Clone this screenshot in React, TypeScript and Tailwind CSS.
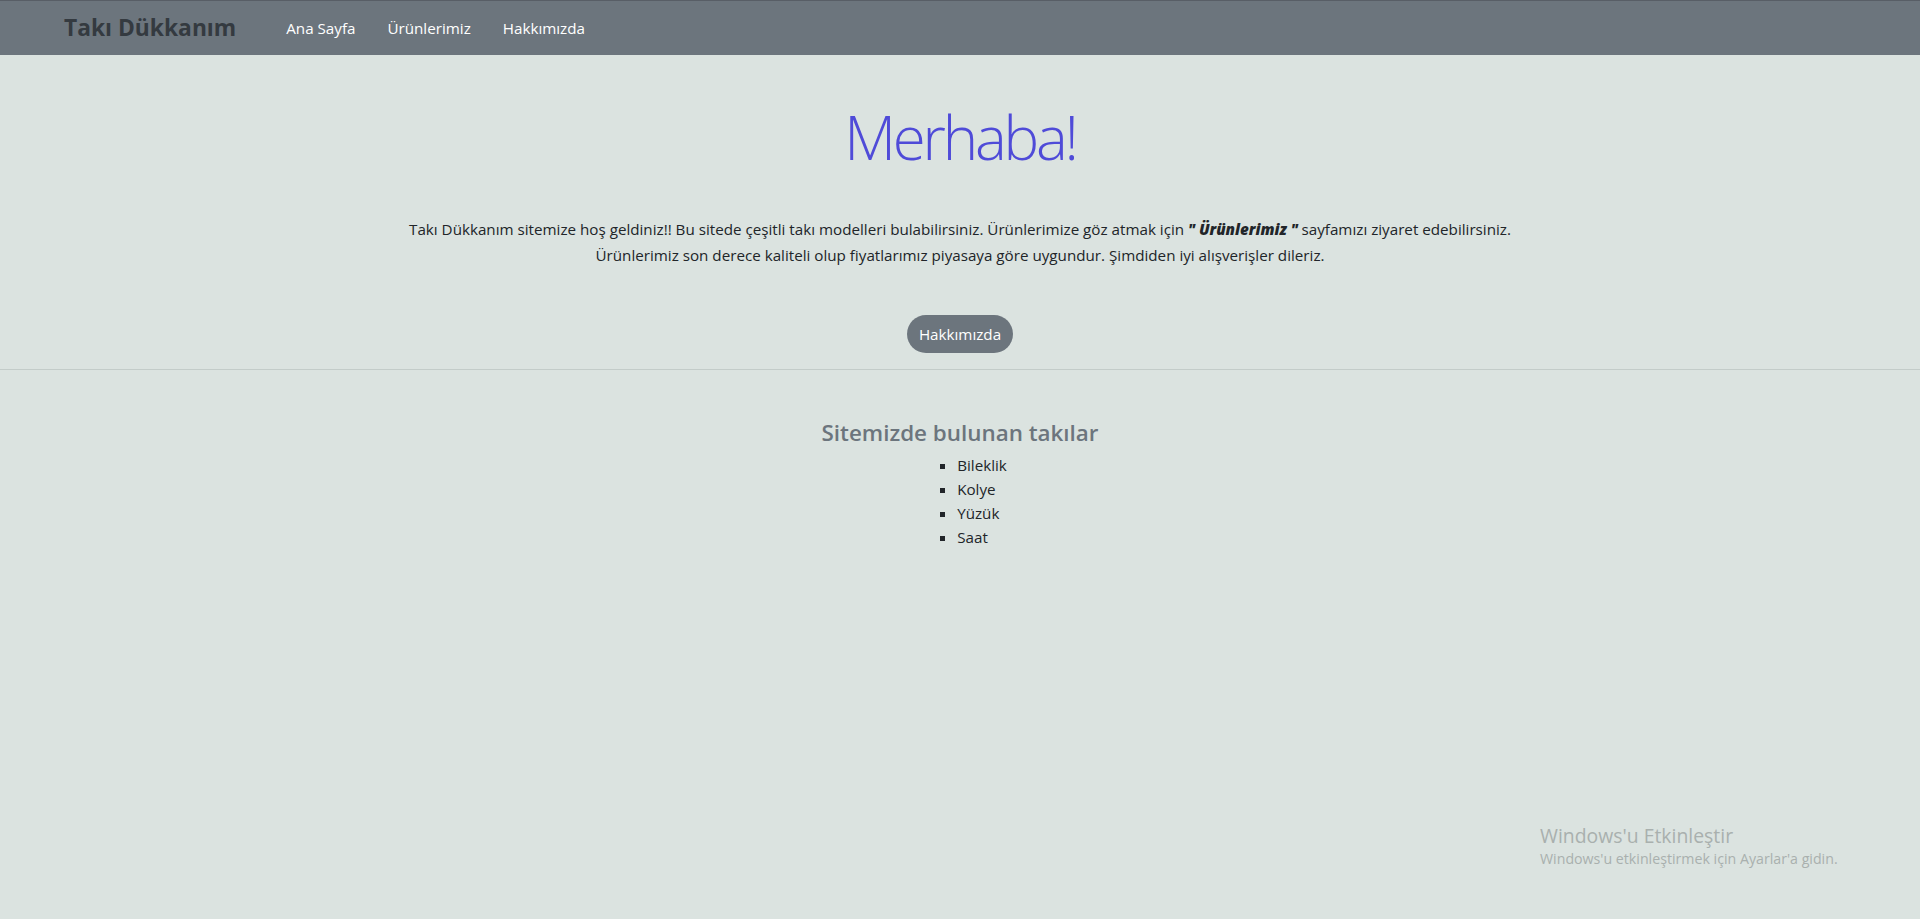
import React from 'react';

const items = ['Bileklik', 'Kolye', 'Yüzük', 'Saat'];

export default function App() {
  return (
    <div
      className="min-h-[919px] bg-[#dbe3e0] text-[#212529] text-[15.2px] relative overflow-hidden"
      style={{ fontFamily: '"Open Sans", "Noto Sans", sans-serif' }}
    >
      <nav className="h-[55px] bg-[#6c757d] border-t border-[#585e66] flex items-center pl-[64px]">
        <a className="text-[22.8px] font-bold text-[#343a40] leading-none mr-[34px]">Takı Dükkanım</a>
        <ul className="flex items-center text-white">
          <li className="px-4">Ana Sayfa</li>
          <li className="px-4">Ürünlerimiz</li>
          <li className="px-4">Hakkımızda</li>
        </ul>
      </nav>

      <section className="text-center pt-[46px]">
        <h1 className="text-[60px] font-light tracking-[-3.2px] text-[#4f4bd8] leading-[72px]">Merhaba!</h1>
        <p className="mt-[43px] leading-[26px]">
          Takı Dükkanım sitemize hoş geldiniz!! Bu sitede çeşitli takı modelleri bulabilirsiniz. Ürünlerimize göz atmak için{' '}
          <b className="font-extrabold italic">" Ürünlerimiz "</b> sayfamızı ziyaret edebilirsiniz.
          <br />
          Ürünlerimiz son derece kaliteli olup fiyatlarımız piyasaya göre uygundur. Şimdiden iyi alışverişler dileriz.
        </p>
        <div className="mt-[47px] pb-[16px]">
          <button className="h-[38px] px-3 rounded-full bg-[#6c757d] text-white">Hakkımızda</button>
        </div>
      </section>

      <hr className="border-t border-[#c3ccc9]" />

      <section className="pt-[48px] text-center">
        <h4 className="text-[22.4px] font-semibold text-[#6c757d] leading-[29px]">Sitemizde bulunan takılar</h4>
        <div className="flex justify-center mt-[6px]">
          <ul className="list-[square] pl-8 text-left leading-[24px] ml-[12px]">
            {items.map((it) => (
              <li key={it}>{it}</li>
            ))}
          </ul>
        </div>
      </section>

      <div className="absolute left-[1540px] top-[823px] text-[#a9b0ae]">
        <div className="text-[19.4px] leading-[26px]">Windows'u Etkinleştir</div>
        <div className="text-[14.2px] leading-[20px]">Windows'u etkinleştirmek için Ayarlar'a gidin.</div>
      </div>
    </div>
  );
}
